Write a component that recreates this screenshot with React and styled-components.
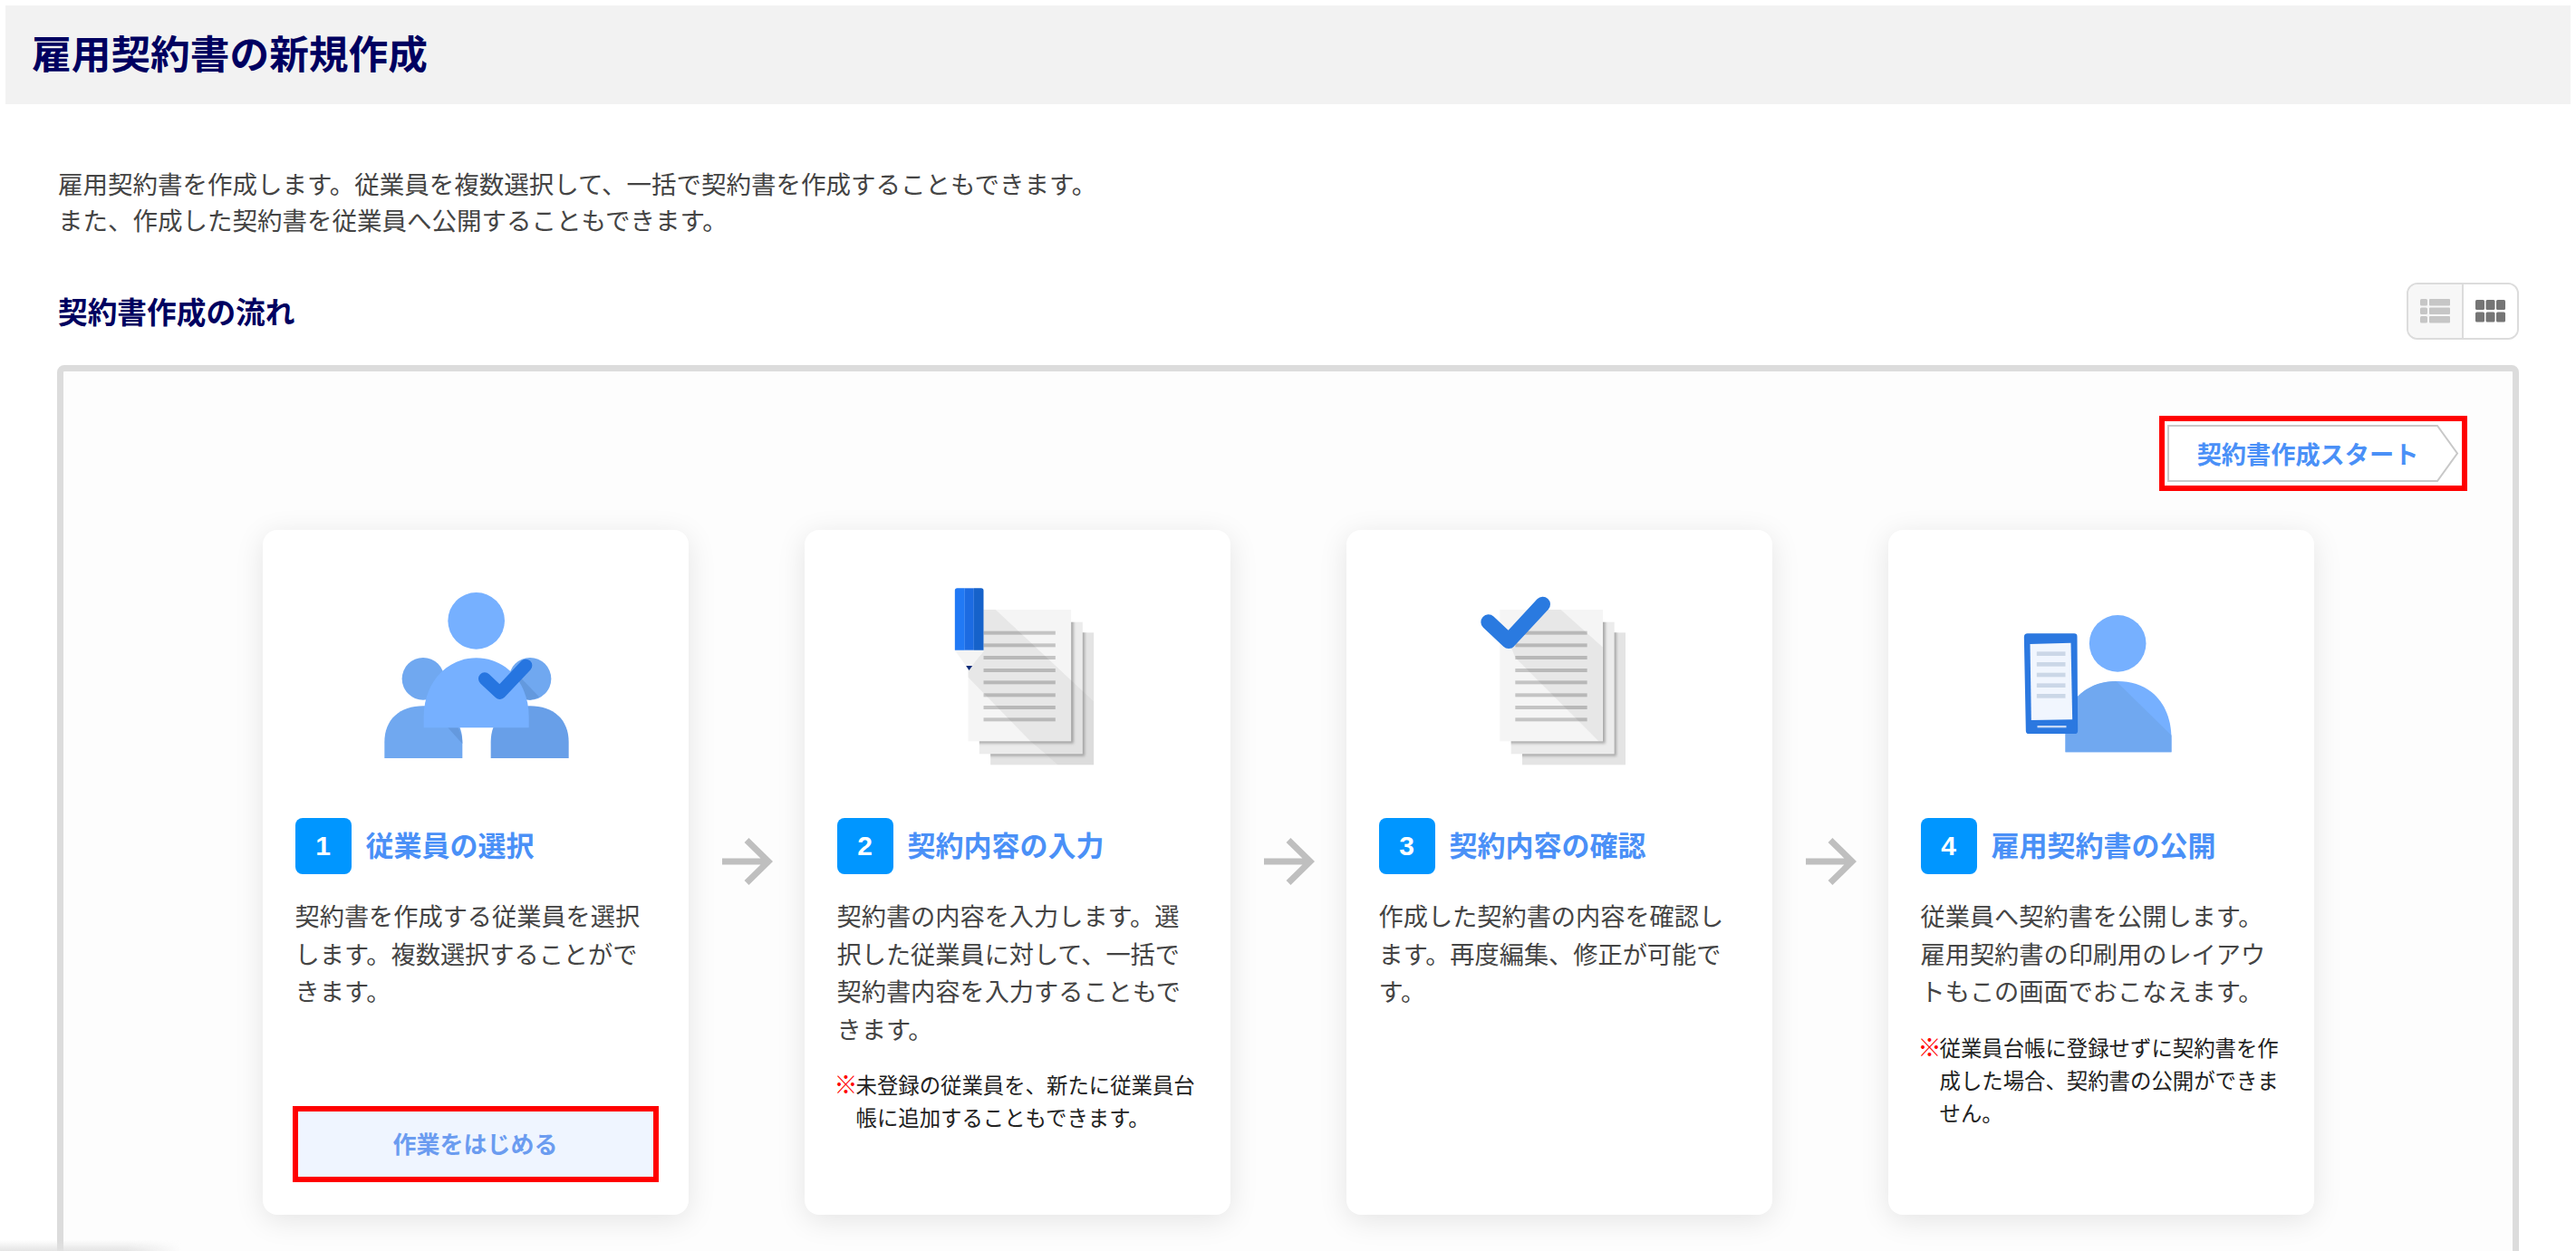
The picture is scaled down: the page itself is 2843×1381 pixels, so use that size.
import React from "react";
import styled, { createGlobalStyle } from "styled-components";

const Global = createGlobalStyle`
  html, body { margin: 0; padding: 0; background: #fff; }
  body { font-family: "Noto Sans CJK JP", "Noto Sans", sans-serif; color: #444; }
  * { box-sizing: border-box; }
`;

const Page = styled.div`
  position: relative;
  height: 100vh;
  overflow: hidden;
  padding-top: 6px;
`;

const Header = styled.header`
  display: flex;
  align-items: center;
  height: 109px;
  margin: 0 6px;
  padding: 0 0 6px 29px;
  background: #f2f2f2;
`;

const Title = styled.h1`
  margin: 0;
  font-size: 43.7px;
  line-height: 1;
  font-weight: 700;
  color: #000060;
`;

const Main = styled.main`
  padding: 67px 63px 0;
`;

const Intro = styled.p`
  margin: 0 0 50px 1px;
  font-size: 27.5px;
  line-height: 40px;
  color: #444;
`;

const SectionRow = styled.div`
  display: flex;
  align-items: center;
  justify-content: space-between;
  height: 63px;
  margin-bottom: 28px;
  padding-left: 1px;
`;

const SectionTitle = styled.h2`
  margin: 0;
  font-size: 32.7px;
  line-height: 1;
  font-weight: 700;
  color: #000060;
`;

const Toggle = styled.div`
  display: flex;
  width: 124px;
  height: 63px;
  border: 2px solid #dcdcdc;
  border-radius: 12px;
  overflow: hidden;
`;

const ToggleCell = styled.div`
  flex: 1;
  display: flex;
  align-items: center;
  justify-content: center;
  background: ${(p) => (p.$muted ? "#f7f7f7" : "#fff")};
  & + & { border-left: 2px solid #dcdcdc; }
`;

const Panel = styled.section`
  border: 7px solid #dcdcdc;
  border-radius: 8px;
  background: #fdfdfd;
  padding: 49px 50px 60px;
`;

const StartRow = styled.div`
  display: flex;
  justify-content: flex-end;
  margin-bottom: 43px;
`;

const StartButton = styled.button`
  position: relative;
  display: flex;
  align-items: center;
  justify-content: center;
  width: 340px;
  height: 83px;
  padding: 0 12px 0 0;
  border: 6px solid #f00;
  background: #fff;
  font: 700 27.2px/1 "Noto Sans CJK JP", sans-serif;
  color: #4a90f7;
`;

const StartOutline = styled.svg`
  position: absolute;
  left: 3px;
  top: 3px;
`;

const StartLabel = styled.span`
  position: relative;
`;

const Flow = styled.div`
  display: flex;
  justify-content: center;
  margin: 0 -50px;
`;

const Card = styled.article`
  display: flex;
  flex-direction: column;
  flex: 0 0 470px;
  height: 756px;
  padding: 40px 36px 36px;
  border-radius: 16px;
  background: #fff;
  box-shadow: 0 6px 32px rgba(0, 0, 0, 0.1);
`;

const IconFrame = styled.svg`
  display: block;
  flex: none;
  width: 300px;
  height: 270px;
  margin: 0 auto 8px;
`;

const StepHead = styled.div`
  display: flex;
  align-items: center;
  gap: 16px;
  margin-bottom: 25px;
`;

const StepNumber = styled.span`
  display: flex;
  align-items: center;
  justify-content: center;
  flex: none;
  width: 62px;
  height: 62px;
  border-radius: 8px;
  background: #0096ff;
  font: 700 30px/1 "Liberation Sans", sans-serif;
  color: #fff;
`;

const StepTitle = styled.h3`
  margin: 0;
  padding-bottom: 5px;
  font-size: 31px;
  line-height: 1;
  font-weight: 700;
  color: #4a90f7;
`;

const StepText = styled.p`
  margin: 0;
  font-size: 27.2px;
  line-height: 41.5px;
  color: #444;
`;

const Note = styled.p`
  margin: 23px -4px 0 0;
  padding-left: 21px;
  text-indent: -21px;
  font-size: 23.4px;
  line-height: 36px;
  color: #222;
`;

const Mark = styled.span`
  display: inline-block;
  width: 24px;
  margin-left: -3px;
  text-indent: 0;
  font-size: 26px;
  line-height: 0;
  font-weight: 700;
  letter-spacing: -4px;
  color: #f00;
`;

const WorkButton = styled.button`
  flex: none;
  height: 84px;
  margin: auto -3px 0;
  padding: 0 0 2px;
  border: 6px solid #f00;
  background: #eff5ff;
  font: 700 26px/1 "Noto Sans CJK JP", sans-serif;
  color: #6b9cf0;
`;

const Connector = styled.div`
  display: flex;
  justify-content: center;
  flex: 0 0 128px;
  padding-top: 339px;
`;

const BottomFade = styled.div`
  position: absolute;
  left: 0;
  bottom: 0;
  width: 200px;
  height: 12px;
  background: linear-gradient(to bottom, rgba(225, 225, 225, 0), rgba(225, 225, 225, 0.9));
  -webkit-mask-image: linear-gradient(to right, #000 70%, transparent);
  mask-image: linear-gradient(to right, #000 70%, transparent);
`;

const ListIcon = () => (
  <svg width="33" height="27" viewBox="0 0 33 27">
    {[0, 9.5, 19].map((y) => (
      <g key={y} fill="#c6c6c6">
        <rect x="0" y={y} width="8" height="7.500" rx="1.500" />
        <rect x="10" y={y} width="23" height="7.500" rx="1" />
      </g>
    ))}
  </svg>
);

const GridIcon = () => (
  <svg width="33" height="25" viewBox="0 0 33 25">
    {[0, 13.5].map((y) =>
      [0, 11.5, 23].map((x) => (
        <rect key={`${x}-${y}`} x={x} y={y} width="10" height="11" rx="1.500" fill="#757575" />
      ))
    )}
  </svg>
);

const ArrowIcon = () => (
  <svg width="58" height="54" viewBox="0 0 58 54">
    <path d="M2 27H52M29 3.500L53 27L29 50.500" fill="none" stroke="#bfbfbf" strokeWidth="7" />
  </svg>
);

const PeopleIcon = () => (
  <IconFrame viewBox="312 162 900 810">
    <circle cx="764" cy="343" r="94" fill="#76b0ff" />
    <circle cx="588" cy="535" r="70" fill="#70a8f0" />
    <circle cx="942" cy="535" r="70" fill="#70a8f0" />
    <path d="M905 525 L972 595 A70 70 0 0 1 942 605 L905 600 Z" fill="#6399de" />
    <path d="M460 798 V745 C460 670 510 625 589 625 C668 625 718 670 718 745 V798 Z" fill="#70a8f0" />
    <path d="M670 697 H704 C712 712 718 728 718 750 Z" fill="#6499de" />
    <path d="M812 798 V745 C812 670 862 625 941 625 C1020 625 1070 670 1070 745 V798 Z" fill="#689fe8" />
    <path d="M590 697 V660 C590 550 665 466 764 466 C863 466 938 550 938 660 V697 Z" fill="#76b0ff" />
    <path d="M792 535 L842 582 L928 491" fill="none" stroke="#2675e0" strokeWidth="42" strokeLinecap="round" strokeLinejoin="round" />
  </IconFrame>
);

const LINE_Y = [383, 424, 465, 507, 547, 589, 630, 670];

const DocStack = ({ id, dx = 0, shade }) => (
  <g transform={`translate(${dx} 0)`}>
    <defs>
      <clipPath id={`${id}-mid`}><rect x="601" y="347" width="342" height="437" /></clipPath>
      <clipPath id={`${id}-back`}><rect x="638" y="382" width="342" height="438" /></clipPath>
      <filter id={`${id}-blur`} x="-10%" y="-10%" width="120%" height="120%">
        <feGaussianBlur stdDeviation="4" />
      </filter>
    </defs>
    <rect x="638" y="382" width="342" height="438" fill="#e4e4e4" />
    <g clipPath={`url(#${id}-back)`}>
      <rect x="601" y="347" width="349" height="444" fill="#a8a8a8" filter={`url(#${id}-blur)`} />
    </g>
    <rect x="601" y="347" width="342" height="437" fill="#ececec" />
    <g clipPath={`url(#${id}-mid)`}>
      <rect x="564" y="306" width="349" height="443" fill="#a8a8a8" filter={`url(#${id}-blur)`} />
    </g>
    <rect x="564" y="306" width="341" height="436" fill="#f5f5f5" />
    <polygon points={shade} fill="#000" fillOpacity="0.055" />
    {LINE_Y.map((y) => (
      <rect key={y} x="615" y={y - 6} width="238" height="12" fill="#000" fillOpacity="0.2" />
    ))}
  </g>
);

const PenIcon = () => (
  <IconFrame viewBox="277.500 162 900 810">
    <DocStack
      id="pen"
      shade="615,306 655,306 905,540 905,742 770,742 564,530 564,505 615,445"
    />
    <polygon points="905,540 943,575 943,784 820,784 770,742 905,742" fill="#000" fillOpacity="0.04" />
    <polygon points="943,575 980,610 980,820 860,820 820,784 943,784" fill="#000" fillOpacity="0.03" />
    <polygon points="520,440 615,440 567,506" fill="#f4f4f4" />
    <polygon points="557,492 578,492 567,507" fill="#0c2a78" />
    <path d="M528 235 H553 V440 H520 V243 A8 8 0 0 1 528 235 Z" fill="#2179f5" />
    <rect x="553" y="235" width="30" height="205" fill="#1c6be2" />
    <path d="M583 235 H607 A8 8 0 0 1 615 243 V440 H583 Z" fill="#1662ca" />
  </IconFrame>
);

const CheckDocIcon = () => (
  <IconFrame viewBox="270 162 900 810">
    <DocStack
      id="check"
      dx={-41}
      shade="691,306 766,306 904,430 904,742 891,742 615,465 601,430"
    />
    <path d="M485 347 L552 410 L665 288" fill="none" stroke="#2a7ae0" strokeWidth="50" strokeLinecap="round" strokeLinejoin="round" />
  </IconFrame>
);

const PhoneIcon = () => (
  <IconFrame viewBox="295.500 162 900 810">
    <circle cx="800" cy="418" r="94" fill="#76b0ff" />
    <path d="M627 778 V700 C627 605 700 543 800 543 C905 543 978 615 978 735 V778 Z" fill="#76b0ff" />
    <path d="M627 778 V700 C627 605 700 543 795 543 L978 722 V778 Z" fill="#70a8f0" />
    <path d="M502 385 H656 A10 10 0 0 1 666 395 L668 707 A10 10 0 0 1 658 717 H506 A10 10 0 0 1 496 707 L490 397 A12 12 0 0 1 502 385 Z" fill="#2b78e0" />
    <polygon points="510,420 645,416 650,670 514,672" fill="#f1f6fe" />
    {[452, 487, 522, 557, 592].map((y) => (
      <rect key={y} x="532" y={y - 7} width="95" height="14" fill="#cbd7e7" />
    ))}
    <rect x="534" y="690" width="96" height="7" fill="#c5d8f5" />
  </IconFrame>
);

const steps = [
  {
    n: 1,
    title: "従業員の選択",
    text: "契約書を作成する従業員を選択します。複数選択することができます。",
    Icon: PeopleIcon,
    action: "作業をはじめる",
  },
  {
    n: 2,
    title: "契約内容の入力",
    text: "契約書の内容を入力します。選択した従業員に対して、一括で契約書内容を入力することもできます。",
    note: "未登録の従業員を、新たに従業員台帳に追加することもできます。",
    Icon: PenIcon,
  },
  {
    n: 3,
    title: "契約内容の確認",
    text: "作成した契約書の内容を確認します。再度編集、修正が可能です。",
    Icon: CheckDocIcon,
  },
  {
    n: 4,
    title: "雇用契約書の公開",
    text: "従業員へ契約書を公開します。雇用契約書の印刷用のレイアウトもこの画面でおこなえます。",
    note: "従業員台帳に登録せずに契約書を作成した場合、契約書の公開ができません。",
    Icon: PhoneIcon,
  },
];

export default function App() {
  return (
    <Page lang="ja">
      <Global />
      <Header>
        <Title>雇用契約書の新規作成</Title>
      </Header>
      <Main>
        <Intro>
          雇用契約書を作成します。従業員を複数選択して、一括で契約書を作成することもできます。
          <br />
          また、作成した契約書を従業員へ公開することもできます。
        </Intro>
        <SectionRow>
          <SectionTitle>契約書作成の流れ</SectionTitle>
          <Toggle>
            <ToggleCell $muted><ListIcon /></ToggleCell>
            <ToggleCell><GridIcon /></ToggleCell>
          </Toggle>
        </SectionRow>
        <Panel>
          <StartRow>
            <StartButton type="button">
              <StartOutline width="322" height="65" viewBox="0 0 322 65">
                <path d="M1 2 H298 L320 32.500 L298 63 H1 Z" fill="#fff" stroke="#c8c8c8" strokeWidth="2" />
              </StartOutline>
              <StartLabel>契約書作成スタート</StartLabel>
            </StartButton>
          </StartRow>
          <Flow>
            {steps.map(({ n, title, text, note, Icon, action }, i) => (
              <React.Fragment key={n}>
                {i > 0 && (
                  <Connector>
                    <ArrowIcon />
                  </Connector>
                )}
                <Card>
                  <Icon />
                  <StepHead>
                    <StepNumber>{n}</StepNumber>
                    <StepTitle>{title}</StepTitle>
                  </StepHead>
                  <StepText>{text}</StepText>
                  {note && (
                    <Note>
                      <Mark>※</Mark>
                      {note}
                    </Note>
                  )}
                  {action && <WorkButton type="button">{action}</WorkButton>}
                </Card>
              </React.Fragment>
            ))}
          </Flow>
        </Panel>
      </Main>
      <BottomFade />
    </Page>
  );
}
